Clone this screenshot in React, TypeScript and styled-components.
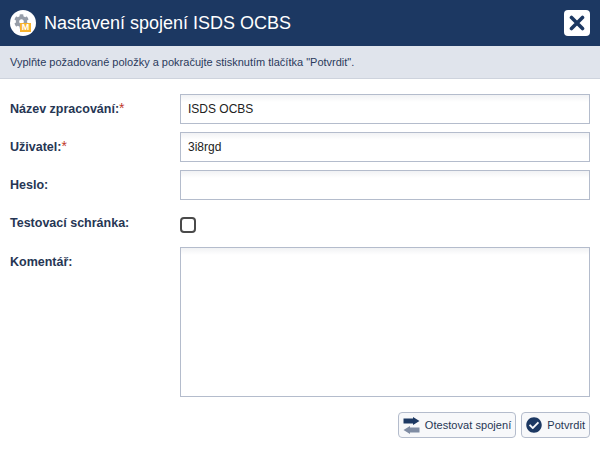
import styled, { createGlobalStyle } from "styled-components";
import { FaCheckCircle, FaCog } from "react-icons/fa";

const Global = createGlobalStyle`
    html, body {
        margin: 0;
        padding: 0;
        background: #fff;
        font-family: "Liberation Sans", Arial, sans-serif;
    }
    * {
        box-sizing: border-box;
    }
`;

const Dialog = styled.div`
    width: 600px;
    height: 453px;
    display: flex;
    flex-direction: column;
    background: #fff;
    overflow: hidden;
`;

const Header = styled.div`
    height: 46px;
    flex: none;
    display: flex;
    align-items: center;
    padding: 0 10px;
    background: #1c3862;
`;

const LogoCircle = styled.div`
    position: relative;
    width: 26px;
    height: 26px;
    border-radius: 50%;
    background: #fff;
    flex: none;
    display: flex;
    align-items: center;
    justify-content: center;
    color: #969da8;
    font-size: 15px;

    svg {
        margin: -3px 0 0 -3px;
    }
`;

const LogoBadge = styled.span`
    position: absolute;
    right: 5px;
    bottom: 4px;
    width: 11px;
    height: 9px;
    background: #f8b32d;
    color: #fff;
    font-size: 9px;
    font-weight: 700;
    line-height: 9px;
    text-align: center;
`;

const Title = styled.h1`
    margin: 0 0 0 8px;
    flex: 1;
    font-size: 18px;
    font-weight: 400;
    color: #fff;
`;

const CloseButton = styled.button`
    width: 26px;
    height: 26px;
    padding: 0;
    border: none;
    border-radius: 4px;
    background: #fff;
    display: flex;
    align-items: center;
    justify-content: center;
`;

const Hint = styled.div`
    height: 33px;
    flex: none;
    padding: 0 10px;
    display: flex;
    align-items: center;
    background: #e0e4ec;
    border-bottom: 1px solid #ced3dd;
    color: #2a3a5c;
    font-size: 11px;
`;

const Form = styled.div`
    flex: 1;
    display: flex;
    flex-direction: column;
    padding: 15px 10px 0;
`;

const Row = styled.div<{ $tall?: boolean; $check?: boolean }>`
    display: grid;
    grid-template-columns: 170px 1fr;
    align-items: start;
    height: ${p => (p.$tall ? "150px" : p.$check ? "39px" : "38px")};
    flex: none;
`;

const Label = styled.label`
    padding-top: 8px;
    font-size: 12.5px;
    font-weight: 700;
    color: #263654;
    line-height: 14px;
`;

const Star = styled.span`
    color: #c0392b;
    font-size: 14px;
    line-height: 0;
    font-weight: 400;
`;

const Input = styled.input`
    width: 100%;
    height: 30px;
    padding: 0 7px;
    border: 1px solid #b4bccc;
    background: linear-gradient(#f1f2f4, #fff 7px);
    font-family: inherit;
    font-size: 12px;
    color: #222;
    outline: none;
`;

const Area = styled.textarea`
    display: block;
    width: 100%;
    height: 150px;
    padding: 6px 7px;
    border: 1px solid #b4bccc;
    background: linear-gradient(#f1f2f4, #fff 7px);
    resize: none;
    outline: none;
`;

const Box = styled.span`
    display: block;
    width: 16px;
    height: 16px;
    margin-top: 9px;
    border: 2px solid #4a4a4a;
    border-radius: 4px;
    background: #fff;
`;

const Footer = styled.div`
    display: flex;
    justify-content: flex-end;
    gap: 5px;
    margin-top: 15px;
`;

const Button = styled.button`
    height: 26px;
    padding: 0 4px;
    display: flex;
    align-items: center;
    gap: 5px;
    border: 1px solid #b4bccc;
    border-radius: 4px;
    background: #f7f8fa;
    font-family: inherit;
    font-size: 11px;
    letter-spacing: 0.05px;
    color: #263654;
    white-space: nowrap;

    svg {
        flex: none;
    }
`;

function CloseIcon() {
    return (
        <svg width="16" height="16" viewBox="0 0 16 16">
            <path d="M2.5 2.5 L13.5 13.5 M13.5 2.5 L2.5 13.5" stroke="#1c3862" strokeWidth="3.6" strokeLinecap="round" />
        </svg>
    );
}

function SwapIcon() {
    return (
        <svg width="17" height="17" viewBox="0 0 17 17">
            <path d="M0.5 1.5 H10 V0 L16.5 4 L10 8 V6.5 H0.5 Z" fill="#1c3862" />
            <path d="M16.5 10.5 H7 V9 L0.5 13 L7 17 V15.5 H16.5 Z" fill="#7f8ca3" />
        </svg>
    );
}

export default function App() {
    return (
        <Dialog>
            <Global />
            <Header>
                <LogoCircle>
                    <FaCog />
                    <LogoBadge>M</LogoBadge>
                </LogoCircle>
                <Title>Nastavení spojení ISDS OCBS</Title>
                <CloseButton aria-label="Zavřít">
                    <CloseIcon />
                </CloseButton>
            </Header>
            <Hint>Vyplňte požadované položky a pokračujte stisknutím tlačítka "Potvrdit".</Hint>
            <Form>
                <Row>
                    <Label>Název zpracování:<Star>*</Star></Label>
                    <Input defaultValue="ISDS OCBS" />
                </Row>
                <Row>
                    <Label>Uživatel:<Star>*</Star></Label>
                    <Input defaultValue="3i8rgd" />
                </Row>
                <Row>
                    <Label>Heslo:</Label>
                    <Input type="password" />
                </Row>
                <Row $check>
                    <Label>Testovací schránka:</Label>
                    <Box />
                </Row>
                <Row $tall>
                    <Label>Komentář:</Label>
                    <Area />
                </Row>
                <Footer>
                    <Button>
                        <SwapIcon />
                        Otestovat spojení
                    </Button>
                    <Button>
                        <FaCheckCircle size={16} color="#1c3862" />
                        Potvrdit
                    </Button>
                </Footer>
            </Form>
        </Dialog>
    );
}
